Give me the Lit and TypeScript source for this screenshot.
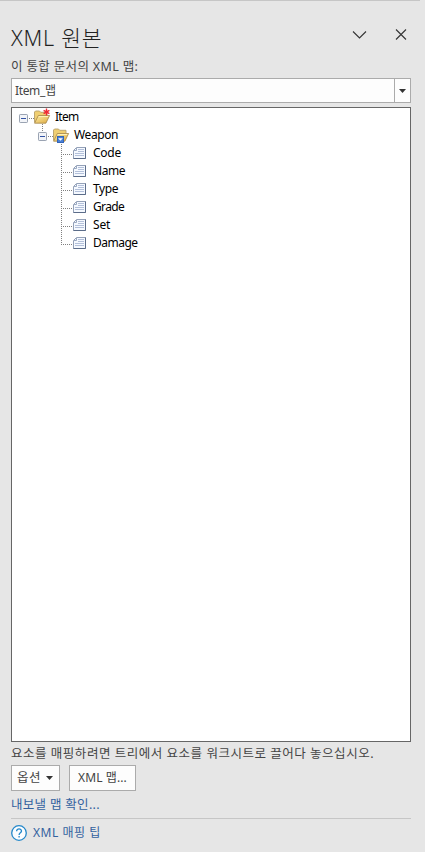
import { LitElement, html, svg, css } from "lit";
import { customElement } from "lit/decorators.js";

type Kind = "root" | "repeat" | "leaf";
interface Row { label: string; depth: number; kind: Kind; last?: boolean; cls: string; }

const ROWS: Row[] = [
  { label: "Item", depth: 0, kind: "root", cls: "item" },
  { label: "Weapon", depth: 1, kind: "repeat", cls: "weapon" },
  { label: "Code", depth: 2, kind: "leaf", cls: "code" },
  { label: "Name", depth: 2, kind: "leaf", cls: "name" },
  { label: "Type", depth: 2, kind: "leaf", cls: "type" },
  { label: "Grade", depth: 2, kind: "leaf", cls: "grade" },
  { label: "Set", depth: 2, kind: "leaf", cls: "set" },
  { label: "Damage", depth: 2, kind: "leaf", last: true, cls: "damage" },
];

const dots = (d: string) => svg`<path d=${d} stroke="#808080" stroke-dasharray="1 1" fill="none" />`;

const expander = svg`
  <rect x="5.5" y="6.5" width="8" height="8" rx=".7" fill="#f2f4f8" stroke="#9aa3b2" />
  <path d="M7 10.5h5" stroke="#3353a4" />`;

const folder = svg`
  <path d="M20.5 14.5V4l1-1h4l1.2 1.3h6.3v3" fill="#f0cf72" stroke="#b7a06b" stroke-width=".9" />
  <path d="M20.6 15.2l3.7-7.7h11.3l-3.7 7.7z" fill="url(#gold)" stroke="#a5854a" stroke-width=".8" />
  <path d="M24.8 8.5h9.4" stroke="#fff3b8" />`;

const star = svg`<path d="M32.5 .5v7M29.6 2.3l5.8 3.4M35.4 2.3l-5.8 3.4" stroke="#f02a34" stroke-width="1.4" />`;

const badge = svg`
  <rect x="24.5" y="10.5" width="6" height="6" fill="#4a80d6" stroke="#3465b8" />
  <path d="M25.1 12.2h4.8l-2.4 2.6z" fill="#fff" />`;

const sheet = svg`
  <path d="M24.5 3.5h9v11h-12v-8z" fill="#f5f9ff" stroke="#94a1b8" />
  <path d="M33.5 3.5v11h-12" fill="none" stroke="#5b6c89" />
  <path d="M24.5 4v2.5H22" fill="none" stroke="#9aa8c0" />
  <path d="M26 5.5h6M26 7.5h6M23 9.5h9M23 11.5h9" stroke="#b3c0da" />`;

const graphic = (r: Row) => html`
  <svg class="graphic" width="41" height="18" viewBox="0 0 41 18">
    <defs><linearGradient id="gold" x1="0" y1="0" x2="1" y2="1">
      <stop offset="0" stop-color="#fff0a6" /><stop offset="1" stop-color="#dda941" />
    </linearGradient></defs>
    ${r.kind === "leaf"
      ? svg`${dots(r.last ? "M9.5 0V11" : "M9.5 0V18")}${dots("M9 10.5H21")}${sheet}`
      : svg`${r.depth ? dots("M9.5 0V6") : null}${dots("M15 10.5H20")}${dots("M28.5 16V18")}${expander}${folder}${r.kind === "root" ? star : badge}`}
  </svg>`;

@customElement("app-root")
export class AppRoot extends LitElement {
  static styles = css`
    :host { display: block; height: 852px; background: #e6e6e6; color: #444;
      font: 12px/18px "Noto Sans", "Noto Sans CJK KR", sans-serif; }
    .pane { box-sizing: border-box; height: 852px; display: flex; flex-direction: column;
      padding: 0 14px 0 11px; white-space: nowrap; }
    .edge { height: 1px; flex: none; margin-left: -11px; width: 420px; background: #c6c6c6; }
    .head { display: flex; align-items: flex-start; height: 56px; flex: none; }
    .title { font: 300 21.5px/28px "Noto Sans", "Noto Sans CJK KR", sans-serif; color: #222; margin: 0; padding-top: 23px; flex: 1; }
    .chevron { margin: 28px 28px 0 0; }
    .close { margin: 27px 4px 0 0; }
    .caption { height: 21px; flex: none; line-height: 20px; font-size: 12.5px; }
    .combo { box-sizing: border-box; height: 25px; flex: none; display: flex; background: #fdfdfd; border: 1px solid #ababab; }
    .value { flex: 1; padding-left: 3px; line-height: 24px; }
    .drop { width: 15px; border-left: 1px solid #ababab; display: grid; place-items: center; }
    .tree { box-sizing: border-box; height: 635px; flex: none; margin: 4px 0 0; padding: 0 0 0 2px;
      background: #fff; border: 1px solid #666; color: #000; list-style: none; }
    .row { display: flex; height: 18px; line-height: 17px; }
    .d1 { padding-left: 19px; }
    .d2 { padding-left: 38px; }
    .graphic { display: block; flex: none; overflow: visible; }
    .hint { height: 23px; flex: none; line-height: 24px; font-size: 12.5px; }
    .buttons { display: flex; gap: 9px; flex: none; }
    .btn { box-sizing: border-box; height: 26px; border: 1px solid #ababab; background: #fdfdfd; color: #444;
      font: inherit; padding: 0; display: flex; align-items: center; justify-content: center; }
    .options { width: 49px; gap: 5px; padding-right: 1px; }
    .maps { width: 67px; }
    .link { color: #33629f; text-decoration: none; }
    .verify { height: 27px; flex: none; line-height: 28px; font-size: 12.5px; }
    .foot { border-top: 1px solid #c6c6c6; display: flex; gap: 6px; line-height: 28px; }
    .help { margin-top: 6px; flex: none; }
    .t-title { letter-spacing: .75px; }
    .t-caption { letter-spacing: .34px; }
    .t-value { letter-spacing: -.35px; }
    .t-item { letter-spacing: -.75px; }
    .t-weapon { letter-spacing: -.4px; }
    .t-code { letter-spacing: -.25px; }
    .t-name { letter-spacing: -.45px; }
    .t-type { letter-spacing: -.4px; }
    .t-grade { letter-spacing: -.65px; }
    .t-set { letter-spacing: -.2px; }
    .t-damage { letter-spacing: -.5px; }
    .t-hint { letter-spacing: .52px; }
    .t-options { font-size: 12.5px; letter-spacing: .4px; }
    .t-maps { letter-spacing: .1px; }
    .t-verify { letter-spacing: .3px; }
    .t-tips { letter-spacing: .55px; }
  `;

  render() {
    return html`<div class="pane">
      <div class="edge"></div>
      <header class="head">
        <h1 class="title"><span class="t-title">XML 원본</span></h1>
        <svg class="chevron" width="15" height="12" viewBox="0 0 15 12"><path d="M1 2.5l6.5 6.5L14 2.5" fill="none" stroke="#333" stroke-width="1.1" /></svg>
        <svg class="close" width="12" height="12" viewBox="0 0 12 12"><path d="M1 1.5l10 10M11 1.5l-10 10" stroke="#333" stroke-width="1.1" /></svg>
      </header>
      <div class="caption"><span class="t-caption">이 통합 문서의 XML 맵:</span></div>
      <div class="combo">
        <div class="value"><span class="t-value">Item_맵</span></div>
        <div class="drop"><svg width="7" height="4" viewBox="0 0 7 4"><path d="M0 0h7L3.5 4z" fill="#333" /></svg></div>
      </div>
      <ul class="tree">
        ${ROWS.map((r) => html`<li class="row d${r.depth}">${graphic(r)}<span class="t-${r.cls}">${r.label}</span></li>`)}
      </ul>
      <div class="hint"><span class="t-hint">요소를 매핑하려면 트리에서 요소를 워크시트로 끌어다 놓으십시오.</span></div>
      <div class="buttons">
        <button class="btn options"><span class="t-options">옵션</span><svg width="7" height="4" viewBox="0 0 7 4"><path d="M0 0h7L3.5 4z" fill="#333" /></svg></button>
        <button class="btn maps"><span class="t-maps">XML 맵...</span></button>
      </div>
      <div class="verify"><a class="link t-verify">내보낼 맵 확인...</a></div>
      <footer class="foot">
        <svg class="help" width="16" height="16" viewBox="0 0 16 16"><circle cx="8" cy="8" r="7.3" fill="#fbfdff" stroke="#2488ca" stroke-width="1.3" /><path d="M5.6 6.2c0-3.2 4.9-3 4.9-.2 0 1.8-2.4 1.8-2.4 3.9M8.1 11.1v1.4" fill="none" stroke="#2488ca" stroke-width="1.3" /></svg>
        <a class="link t-tips">XML 매핑 팁</a>
      </footer>
    </div>`;
  }
}
